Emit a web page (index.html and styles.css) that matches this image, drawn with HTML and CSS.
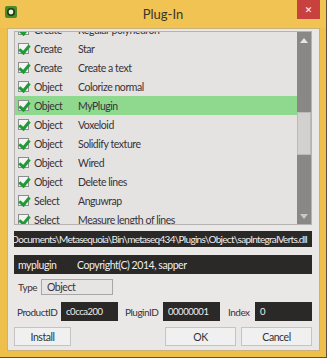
FILE: index.html
```html
<!DOCTYPE html>
<html lang="en">
<head>
    <meta charset="UTF-8">
    <title>Plug-In</title>
    <link rel="stylesheet" href="styles.css">
</head>
<body>
    <div class="window">
        <div class="titlebar">
            <svg class="app-icon" width="12" height="12" viewBox="0 0 12 12">
                <rect x="0" y="0" width="12" height="12" rx="2" fill="#4a8a2c"/>
                <circle cx="6" cy="6" r="4" fill="#1f3a14"/>
                <circle cx="6" cy="6" r="2.4" fill="#eaf7d8"/>
            </svg>
            <div class="title">Plug-In</div>
            <div class="close">&#x2715;</div>
        </div>

        <div class="content">
            <div class="list">
                <div class="rows">
                    <div class="item"><span class="check"></span><span class="cat">Create</span><span class="name">Regular polyhedron</span></div>
                    <div class="item"><span class="check"></span><span class="cat">Create</span><span class="name">Star</span></div>
                    <div class="item"><span class="check"></span><span class="cat">Create</span><span class="name">Create a text</span></div>
                    <div class="item"><span class="check"></span><span class="cat">Object</span><span class="name">Colorize normal</span></div>
                    <div class="item selected"><span class="check"></span><span class="cat">Object</span><span class="name">MyPlugin</span></div>
                    <div class="item"><span class="check"></span><span class="cat">Object</span><span class="name">Voxeloid</span></div>
                    <div class="item"><span class="check"></span><span class="cat">Object</span><span class="name">Solidify texture</span></div>
                    <div class="item"><span class="check"></span><span class="cat">Object</span><span class="name">Wired</span></div>
                    <div class="item"><span class="check"></span><span class="cat">Object</span><span class="name">Delete lines</span></div>
                    <div class="item"><span class="check"></span><span class="cat">Select</span><span class="name">Anguwrap</span></div>
                    <div class="item"><span class="check"></span><span class="cat">Select</span><span class="name">Measure length of lines</span></div>
                </div>
                <div class="scrollbar">
                    <div class="arrow up"></div>
                    <div class="track">
                        <div class="thumb"></div>
                    </div>
                    <div class="arrow down"></div>
                </div>
            </div>

            <div class="path"><span>C:\Users\sapper\Documents\Metasequoia\Bin\metaseq434\Plugins\Object\sapIntegralVerts.dll</span></div>

            <div class="namebar">
                <span class="plugname">myplugin</span>
                <span>Copyright(C) 2014, sapper</span>
            </div>

            <div class="field-row">
                <span class="label type-label">Type</span>
                <div class="box light">Object</div>
            </div>

            <div class="field-row ids">
                <span class="label product-label">ProductID</span>
                <div class="box dark">c0cca200</div>
                <span class="label plugin-label">PluginID</span>
                <div class="box dark">00000001</div>
                <span class="label index-label">Index</span>
                <div class="box dark">0</div>
            </div>

            <div class="buttons">
                <button class="btn install">Install</button>
                <div class="spacer"></div>
                <button class="btn ok">OK</button>
                <button class="btn cancel">Cancel</button>
            </div>
        </div>
    </div>
</body>
</html>
```

FILE: styles.css
```css
* {
    margin: 0;
    padding: 0;
    box-sizing: border-box;
}

body {
    background: #ffffff;
    font-family: 'Lato', 'Liberation Sans', sans-serif;
    font-size: 10.5px;
    letter-spacing: -0.45px;
    color: #3a3238;
}

.window {
    width: 327px;
    height: 358px;
    background: #efbf4c;
    border-right: 1px solid #5a5048;
    border-bottom: 1px solid #5a5048;
    padding: 0 6px 6px 7px;
    display: flex;
    flex-direction: column;
}

/* Barra de título */
.titlebar {
    height: 28px;
    margin: 0 -6px 0 -7px;
    display: flex;
    align-items: flex-start;
    position: relative;
    background: #f1c353;
}

.app-icon {
    margin: 6px 0 0 5px;
}

.title {
    position: absolute;
    left: 0;
    right: 0;
    top: 6px;
    text-align: center;
    font-size: 13px;
    letter-spacing: 0;
    color: #3c3428;
}

.close {
    position: absolute;
    right: 6px;
    top: 0;
    width: 23px;
    height: 19px;
    background: #c9413f;
    color: #ffffff;
    font-family: 'DejaVu Sans', sans-serif;
    font-size: 9px;
    font-weight: bold;
    letter-spacing: 0;
    display: flex;
    align-items: center;
    justify-content: center;
}

/* Área principal */
.content {
    flex: 1;
    background: #e9e8e7;
    border: 1px solid #c8b27a;
    padding: 2px 7px 0 6px;
    display: flex;
    flex-direction: column;
}

.list {
    height: 194px;
    display: flex;
    background: #e4e3e2;
    border: 1px solid #b5b3b1;
    overflow: hidden;
}

.rows {
    flex: 1;
    margin-top: -12px;
}

.item {
    height: 19px;
    display: flex;
    align-items: center;
    padding-left: 3px;
}

.item.selected {
    background: #8fd98f;
}

.check {
    width: 11px;
    height: 11px;
    border: 1px solid #8d8d8d;
    background: #f4f4f4;
    position: relative;
    margin-right: 5px;
}

.check::after {
    content: "";
    position: absolute;
    left: 2px;
    top: -1px;
    width: 4px;
    height: 8px;
    border-right: 3px solid #1f9a35;
    border-bottom: 3px solid #1f9a35;
    transform: rotate(40deg);
}

.cat {
    width: 44px;
}

.name {
    white-space: nowrap;
}

.scrollbar {
    width: 14px;
    background: #8a8887;
    display: flex;
    flex-direction: column;
}

.arrow {
    height: 16px;
    display: flex;
    align-items: center;
    justify-content: center;
}

.arrow::before {
    content: "";
    border-left: 4px solid transparent;
    border-right: 4px solid transparent;
}

.arrow.up::before {
    border-bottom: 5px solid #e6e6e6;
}

.arrow.down::before {
    border-top: 5px solid #c9c9c9;
}

.track {
    flex: 1;
    padding-top: 64px;
}

.thumb {
    height: 43px;
    background: #d3d1d0;
    border: 1px solid #bcbab9;
}

.path {
    margin-top: 6px;
    height: 16px;
    background: #2b2927;
    color: #eeeeee;
    display: flex;
    justify-content: flex-end;
    align-items: center;
    overflow: hidden;
    white-space: nowrap;
    padding-right: 5px;
    font-size: 10px;
    letter-spacing: -0.7px;
}

.namebar {
    margin-top: 8px;
    height: 19px;
    background: #2b2927;
    color: #eeeeee;
    display: flex;
    align-items: center;
    padding-left: 4px;
}

.plugname {
    width: 59px;
}

.field-row {
    margin-top: 5px;
    height: 16px;
    display: flex;
    align-items: center;
    padding-left: 4px;
}

.field-row.ids {
    margin-top: 7px;
    height: 19px;
    padding-left: 3px;
}

.label {
    flex-shrink: 0;
    font-size: 10px;
    letter-spacing: -0.5px;
}

.type-label {
    width: 23px;
}

.product-label {
    width: 44px;
}

.plugin-label {
    width: 38px;
    margin-left: 7px;
}

.index-label {
    width: 27px;
    margin-left: 8px;
}

.box {
    height: 100%;
    display: flex;
    align-items: center;
    padding-left: 5px;
}

.box.light {
    width: 72px;
    background: #e6e5e4;
    border: 1px solid #a9a7a6;
}

.box.dark {
    width: 57px;
    background: #2b2927;
    color: #eeeeee;
    font-size: 9.5px;
}

.box.dark:last-child {
    flex: 1;
}

.buttons {
    margin-top: 6px;
    height: 19px;
    display: flex;
}

.btn {
    font-family: inherit;
    font-size: 10.5px;
    letter-spacing: -0.45px;
    color: #333333;
    background: #f1f0f0;
    border: 1px solid #c5c4c3;
    height: 19px;
}

.install {
    width: 57px;
}

.spacer {
    flex: 1;
}

.ok {
    width: 71px;
    margin-right: 5px;
}

.cancel {
    width: 71px;
}
```
